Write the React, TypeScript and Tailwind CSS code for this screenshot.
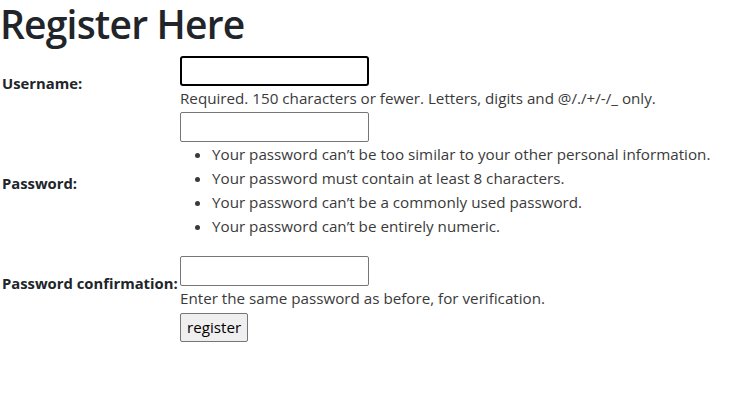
const font = "font-['Open_Sans','Noto_Sans',sans-serif]";

const passwordRules = [
  "Your password can’t be too similar to your other personal information.",
  "Your password must contain at least 8 characters.",
  "Your password can’t be a commonly used password.",
  "Your password can’t be entirely numeric.",
];

function Label({ children }: { children: React.ReactNode }) {
  return (
    <label className="pl-[2px] text-[14.8px] font-bold text-[#212529] whitespace-nowrap">
      {children}
    </label>
  );
}

function Input({ focused = false }: { focused?: boolean }) {
  return (
    <input
      type="text"
      className={
        focused
          ? "block w-[189px] h-[30px] rounded-[3px] border-2 border-black bg-white outline-none"
          : "block w-[189px] h-[30px] rounded-[2px] border border-[#767676] bg-white outline-none"
      }
    />
  );
}

export default function App() {
  return (
    <div className={`${font} bg-white w-[729px] h-[402px] text-[#212529]`}>
      <h1 className="text-[39px] font-semibold leading-[48px] mb-2 tracking-[-0.8px] whitespace-nowrap">
        Register Here
      </h1>

      <div className="grid grid-cols-[178px_1fr] gap-x-[2px] gap-y-[2px] items-center">
        {/* Username */}
        <Label>Username:</Label>
        <div>
          <Input focused />
          <p className="text-[15.2px] leading-6 text-[#3a3a3a]">
            Required. 150 characters or fewer. Letters, digits and @/./+/-/_ only.
          </p>
        </div>

        {/* Password */}
        <Label>Password:</Label>
        <div>
          <Input />
          <ul className="list-disc pl-8 mb-4 text-[15.2px] leading-6 text-[#3a3a3a]">
            {passwordRules.map((rule) => (
              <li key={rule}>{rule}</li>
            ))}
          </ul>
        </div>

        {/* Confirmation */}
        <Label>Password confirmation:</Label>
        <div>
          <Input />
          <p className="text-[15.2px] leading-6 text-[#3a3a3a]">
            Enter the same password as before, for verification.
          </p>
        </div>

        <div />
        <div className="pt-[1px]">
          <button className="h-[29px] px-[6px] rounded-[2px] border border-[#767676] bg-[#efefef] text-[15.2px] text-black">
            register
          </button>
        </div>
      </div>
    </div>
  );
}
